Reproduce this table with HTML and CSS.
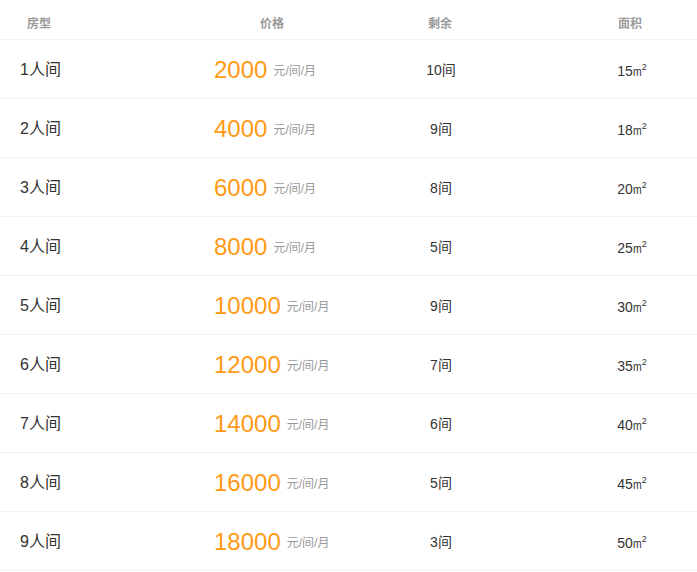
FILE: index.html
```html
<!DOCTYPE html>
<html lang="zh">
<head>
<meta charset="utf-8">
<link rel="stylesheet" href="styles.css">
</head>
<body>
<div class="table">
  <div class="row head">
    <div class="c1">房型</div>
    <div class="c2">价格</div>
    <div class="c3">剩余</div>
    <div class="c4">面积</div>
  </div>
  <div class="row"><div class="c1">1人间</div><div class="c2"><span class="price">2000</span><span class="unit">元/间/月</span></div><div class="c3">10间</div><div class="c4">15<span class="m">m</span><sup>2</sup></div></div>
  <div class="row"><div class="c1">2人间</div><div class="c2"><span class="price">4000</span><span class="unit">元/间/月</span></div><div class="c3">9间</div><div class="c4">18<span class="m">m</span><sup>2</sup></div></div>
  <div class="row"><div class="c1">3人间</div><div class="c2"><span class="price">6000</span><span class="unit">元/间/月</span></div><div class="c3">8间</div><div class="c4">20<span class="m">m</span><sup>2</sup></div></div>
  <div class="row"><div class="c1">4人间</div><div class="c2"><span class="price">8000</span><span class="unit">元/间/月</span></div><div class="c3">5间</div><div class="c4">25<span class="m">m</span><sup>2</sup></div></div>
  <div class="row"><div class="c1">5人间</div><div class="c2"><span class="price">10000</span><span class="unit">元/间/月</span></div><div class="c3">9间</div><div class="c4">30<span class="m">m</span><sup>2</sup></div></div>
  <div class="row"><div class="c1">6人间</div><div class="c2"><span class="price">12000</span><span class="unit">元/间/月</span></div><div class="c3">7间</div><div class="c4">35<span class="m">m</span><sup>2</sup></div></div>
  <div class="row"><div class="c1">7人间</div><div class="c2"><span class="price">14000</span><span class="unit">元/间/月</span></div><div class="c3">6间</div><div class="c4">40<span class="m">m</span><sup>2</sup></div></div>
  <div class="row"><div class="c1">8人间</div><div class="c2"><span class="price">16000</span><span class="unit">元/间/月</span></div><div class="c3">5间</div><div class="c4">45<span class="m">m</span><sup>2</sup></div></div>
  <div class="row"><div class="c1">9人间</div><div class="c2"><span class="price">18000</span><span class="unit">元/间/月</span></div><div class="c3">3间</div><div class="c4">50<span class="m">m</span><sup>2</sup></div></div>
</div>
</body>
</html>
```
FILE: styles.css
```css
html, body {
  margin: 0;
  padding: 0;
  background: #fff;
}
body {
  font-family: "Liberation Sans", "Noto Sans CJK SC", sans-serif;
  color: #333;
}
.table {
  display: flex;
  flex-direction: column;
}
.row {
  display: grid;
  grid-template-columns: 214px 170px 114px 1fr;
  align-items: center;
  height: 56px;
  padding-top: 2px;
  border-bottom: 1px solid #f0f0f0;
  font-size: 14px;
  line-height: 1;
}
.row .c1 {
  padding-left: 20px;
  font-size: 16px;
}
.row .c2 {
  display: flex;
  align-items: center;
}
.price {
  font-size: 24px;
  color: #ff9a16;
}
.unit {
  font-size: 12px;
  color: #999;
  margin-left: 6px;
  padding-top: 2px;
}
.row .c3 {
  text-align: center;
}
.row .c4 {
  padding-left: 69px;
  text-align: center;
}
.m {
  display: inline-block;
  font-size: 13px;
  transform: scaleX(0.8);
  margin: 0 -1px;
}
sup {
  font-size: 9px;
  vertical-align: 6px;
}
.row.head {
  height: 40px;
  box-sizing: border-box;
  padding-top: 9px;
  font-size: 12px;
  font-weight: bold;
  color: #999;
}
.row.head .c1 {
  padding-left: 27px;
  font-size: 12px;
}
.row.head .c2 {
  padding-left: 46px;
}
.row.head .c3 {
  text-align: left;
  padding-left: 44px;
}
.row.head .c4 {
  text-align: left;
  padding-left: 120px;
}
```
